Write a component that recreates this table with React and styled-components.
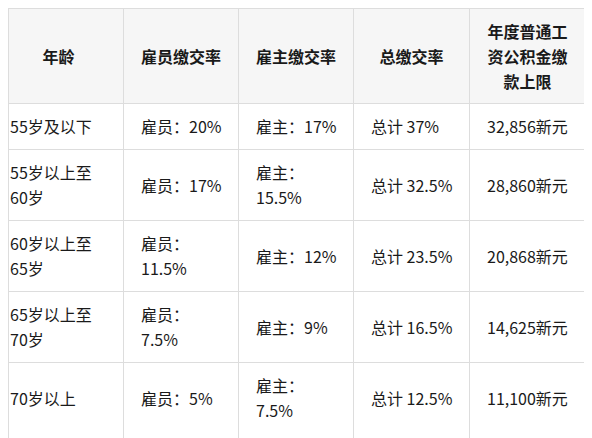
import React from 'react';
import styled, { createGlobalStyle } from 'styled-components';

const GlobalStyle = createGlobalStyle`
  body {
    margin: 8px;
    background: #fff;
    font-family: 'Noto Sans CJK SC', 'Noto Sans', sans-serif;
    color: #1a1a1a;
  }
`;

const Table = styled.table`
  width: 577px;
  table-layout: fixed;
  border-collapse: collapse;
  font-size: 16px;
  line-height: 25px;
`;

const Th = styled.th`
  background: #f6f6f6;
  border: 1px solid #dddddd;
  font-weight: bold;
  text-align: center;
  vertical-align: middle;
  padding: ${props => (props.first ? '10px 16px 9px 1px' : '10px 16px 9px')};
`;

const Td = styled.td`
  border: 1px solid #dddddd;
  text-align: left;
  vertical-align: middle;
  padding: ${props => (props.first ? '10px 16px 10px 1px' : '10px 16px 10px 17px')};
`;

const Row = styled.tr`
  &:last-child td {
    border-bottom-color: transparent;
    padding-bottom: 14px;
  }
`;

const headers = ['年龄', '雇员缴交率', '雇主缴交率', '总缴交率', '年度普通工资公积金缴款上限'];

const rows = [
  ['55岁及以下', '雇员：20%', '雇主：17%', '总计 37%', '32,856新元'],
  ['55岁以上至60岁', '雇员：17%', '雇主：15.5%', '总计 32.5%', '28,860新元'],
  ['60岁以上至65岁', '雇员：11.5%', '雇主：12%', '总计 23.5%', '20,868新元'],
  ['65岁以上至70岁', '雇员：7.5%', '雇主：9%', '总计 16.5%', '14,625新元'],
  ['70岁以上', '雇员：5%', '雇主：7.5%', '总计 12.5%', '11,100新元'],
];

const widths = [115, 115, 115, 116, 116];

export default function App() {
  return (
    <>
      <GlobalStyle />
      <Table>
        <colgroup>
          {widths.map((w, i) => (
            <col key={i} style={{ width: w }} />
          ))}
        </colgroup>
        <thead>
          <tr>
            {headers.map((h, i) => (
              <Th key={i} first={i === 0}>
                {h}
              </Th>
            ))}
          </tr>
        </thead>
        <tbody>
          {rows.map((row, r) => (
            <Row key={r}>
              {row.map((cell, i) => (
                <Td key={i} first={i === 0}>
                  {cell}
                </Td>
              ))}
            </Row>
          ))}
        </tbody>
      </Table>
    </>
  );
}
